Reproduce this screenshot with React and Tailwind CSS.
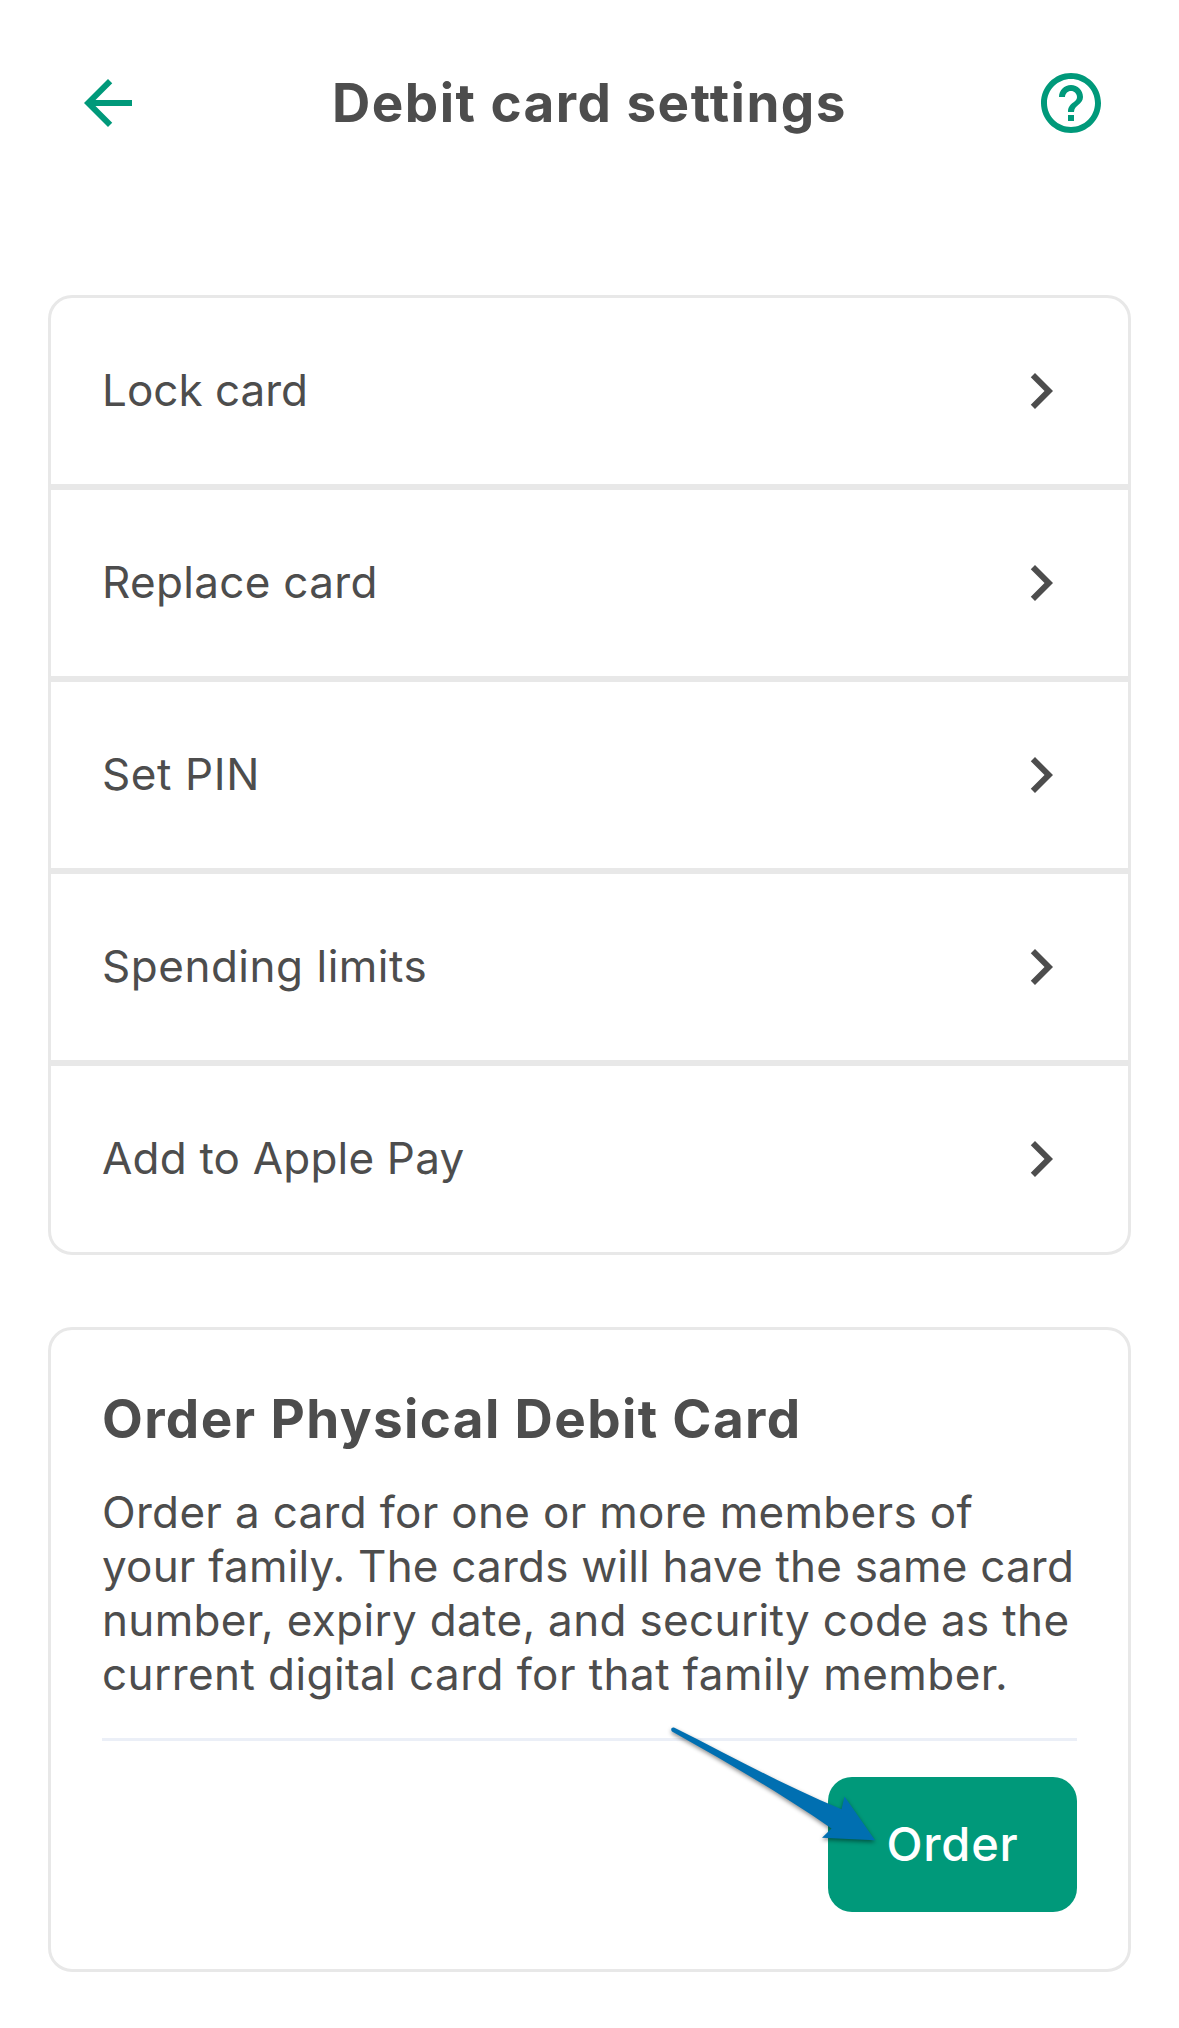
import { MdArrowBack, MdHelpOutline, MdNavigateNext } from 'react-icons/md';

const settings = [
  { label: 'Lock card', tracking: 'tracking-[0px]' },
  { label: 'Replace card', tracking: 'tracking-[0.32px]' },
  { label: 'Set PIN', tracking: 'tracking-[0.6px]' },
  { label: 'Spending limits', tracking: 'tracking-[0.52px]' },
  { label: 'Add to Apple Pay', tracking: 'tracking-[0.2px]' },
];

const description = [
  { text: 'Order a card for one or more members of', tracking: 'tracking-[0.32px]' },
  { text: 'your family. The cards will have the same card', tracking: 'tracking-[0.2px]' },
  { text: 'number, expiry date, and security code as the', tracking: 'tracking-[0.34px]' },
  { text: 'current digital card for that family member.', tracking: 'tracking-[0.43px]' },
];

function Header() {
  return (
    <header className="flex h-[206px] items-center justify-between px-[72px] text-[#00997a]">
      <button type="button" aria-label="Back">
        <MdArrowBack className="size-[72px]" />
      </button>
      <h1 className="pt-0.5 text-[53px] font-bold tracking-[1.47px] text-[#4d4d4d]">Debit card settings</h1>
      <button type="button" aria-label="Help">
        <MdHelpOutline className="size-[72px]" />
      </button>
    </header>
  );
}

function SettingsList() {
  return (
    <ul className="mt-[89px] overflow-hidden rounded-3xl border-[3px] border-[#e8e8e8]">
      {settings.map(({ label, tracking }) => (
        <li
          key={label}
          className="flex h-48 items-center justify-between border-b-[6px] border-[#e8e8e8] px-[51px] last:h-[186px] last:border-b-0"
        >
          <span className={`pb-0.5 text-[44px] ${tracking}`}>{label}</span>
          <MdNavigateNext className="size-[72px]" />
        </li>
      ))}
    </ul>
  );
}

function Pointer() {
  return (
    <svg
      className="pointer-events-none absolute -top-[54px] -left-[161px] h-[124px] w-[213px] drop-shadow-[0_2px_2px_rgba(0,0,0,0.45)]"
      viewBox="0 0 213 124"
      fill="#006fb1"
    >
      <path d="M7.500 4.700C60 31 118 63 174.500 86.300L177.500 73.500L208 117.300L155 114.800L164.500 105.500C112 69 56 37 5 8.500C3 6 5 3.500 7.500 4.700Z" />
    </svg>
  );
}

function OrderCard() {
  return (
    <section className="mt-[72px] h-[645px] rounded-3xl border-[3px] border-[#e8e8e8] px-[51px] pt-[56px]">
      <h2 className="text-[53px] leading-[66px] font-bold tracking-[1.37px]">Order Physical Debit Card</h2>
      <p className="mt-[33px] text-[44px] leading-[54px] whitespace-nowrap">
        {description.map(({ text, tracking }) => (
          <span key={text} className={`block ${tracking}`}>
            {text}
          </span>
        ))}
      </p>
      <hr className="mt-[37px] border-t-[3px] border-[#ebeff7]" />
      <div className="mt-9 flex justify-end">
        <div className="relative">
          <button
            type="button"
            className="h-[135px] w-[249px] rounded-3xl bg-[#00997a] text-[47px] font-medium tracking-[0.8px] text-white"
          >
            Order
          </button>
          <Pointer />
        </div>
      </div>
    </section>
  );
}

export default function App() {
  return (
    <div className="h-[2028px] w-[1179px] bg-white font-[Inter,sans-serif] text-[#4d4d4d]">
      <Header />
      <main className="px-12">
        <SettingsList />
        <OrderCard />
      </main>
    </div>
  );
}
